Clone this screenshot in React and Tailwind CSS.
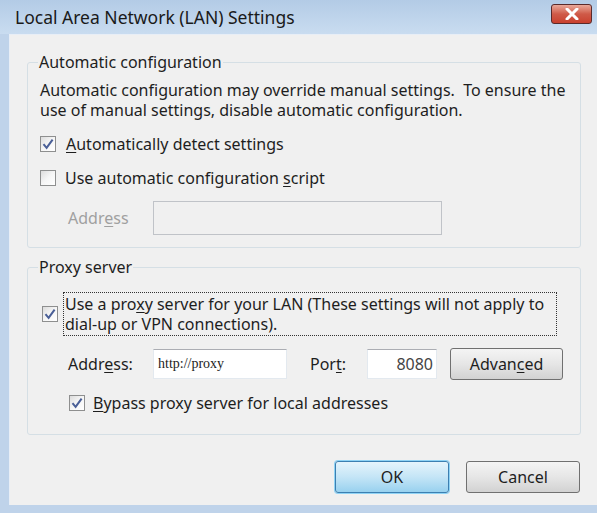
const font = { fontFamily: '"Noto Sans", "Open Sans", sans-serif' }

function Check({ checked, className = '' }) {
  return (
    <span className={`inline-flex items-center justify-center w-[16px] h-[16px] border border-[#8e8f8f] bg-gradient-to-br from-[#dcdcdc] via-[#f6f6f6] to-[#ffffff] shrink-0 ${className}`}>
      {checked && (
        <svg width="12" height="12" viewBox="0 0 12 12">
          <path d="M1.5 6.2 L4.6 9.8 L10.6 1.6" fill="none" stroke="#4a5f97" strokeWidth="2" />
        </svg>
      )}
    </span>
  )
}

function U({ children }) {
  return <span className="underline underline-offset-2">{children}</span>
}

export default function App() {
  return (
    <div className="w-[597px] h-[513px] flex flex-col bg-[#bfd3ea] text-[#1e1e1e] text-[16px] leading-[20px] overflow-hidden" style={font}>
      {/* title bar */}
      <div className="h-[34px] flex items-center justify-between pl-[15px] pr-[5px] bg-gradient-to-b from-[#b3cbe6] to-[#c9dcf0]">
        <div className="text-[17.5px] text-[#1a1a1a]">Local Area Network (LAN) Settings</div>
        <div className="w-[41px] h-[20px] -mt-[6px] rounded-[3px] border border-[#5a2a2a] bg-gradient-to-b from-[#e8a89a] via-[#cf5a48] to-[#c9402e] flex items-center justify-center">
          <svg width="14" height="12" viewBox="0 0 14 12">
            <path d="M2 1 L12 11 M12 1 L2 11" stroke="#fff" strokeWidth="3" strokeLinecap="round" />
          </svg>
        </div>
      </div>

      <div className="flex-1 flex pl-[9px] pb-[8px]">
        <div className="flex-1 bg-[#f0f0f0] border-l border-t border-[#e8eef6] flex flex-col">
          {/* Automatic configuration */}
          <fieldset className="ml-[17px] mt-[17px] w-[554px] h-[196px] border border-[#d5dfe5] rounded-[3px] pl-[12px] pr-[6px] pb-0">
            <legend className="px-[1px] -ml-[2px]">Automatic configuration</legend>
            <p className="mt-[8px] whitespace-nowrap">
              Automatic configuration may override manual settings.&nbsp; To ensure the
              <br />
              use of manual settings, disable automatic configuration.
            </p>
            <label className="flex items-center gap-[10px] mt-[14px]">
              <Check checked />
              <span><U>A</U>utomatically detect settings</span>
            </label>
            <label className="flex items-center gap-[9px] mt-[14px]">
              <Check />
              <span>Use automatic configuration <U>s</U>cript</span>
            </label>
            <div className="flex items-center mt-[13px]">
              <span className="ml-[28px] w-[85px] text-[#a0a0a0]">Addr<U>e</U>ss</span>
              <div className="w-[289px] h-[34px] border border-[#c0c3c8] bg-[#f0f0f0]" />
            </div>
          </fieldset>

          {/* Proxy server */}
          <fieldset className="ml-[17px] mt-[9px] w-[554px] h-[178px] border border-[#d5dfe5] rounded-[3px] pl-[14px] pr-[6px]">
            <legend className="px-[1px] -ml-[4px]">Proxy server</legend>
            <div className="flex items-center mt-[15px]">
              <Check checked />
              <div className="ml-[5px] w-[494px] border border-dotted border-[#333] px-[1px] py-[1px] whitespace-nowrap">
                Use a pro<U>x</U>y server for your LAN (These settings will not apply to
                <br />
                dial-up or VPN connections).
              </div>
            </div>
            <div className="flex items-center mt-[12px] pl-[26px]">
              <span className="w-[85px]">Addr<U>e</U>ss:</span>
              <div className="w-[134px] h-[30px] border border-[#e3e9ef] border-t-[#abadb3] bg-white flex items-center pl-[4px] text-[14px] text-[#222]" style={{ fontFamily: '"Liberation Serif", serif' }}>
                http://proxy
              </div>
              <span className="ml-[23px] w-[57px]">Por<U>t</U>:</span>
              <div className="w-[70px] h-[30px] border border-[#e3e9ef] border-t-[#abadb3] bg-white flex items-center justify-end pr-[3px] text-[16px] text-[#444]">
                8080
              </div>
              <button className="ml-[13px] w-[113px] h-[32px] rounded-[3px] border border-[#707070] bg-gradient-to-b from-[#f4f4f4] via-[#e6e6e6] to-[#d2d2d2]">
                Advan<U>c</U>ed
              </button>
            </div>
            <label className="flex items-center gap-[8px] mt-[13px] pl-[27px]">
              <Check checked />
              <span><U>B</U>ypass proxy server for local addresses</span>
            </label>
          </fieldset>

          {/* buttons */}
          <div className="flex justify-end gap-[17px] mt-[26px] pr-[17px]">
            <button className="w-[114px] h-[32px] rounded-[3px] border border-[#3c7fb1] shadow-[0_0_0_1px_#8fd3f5] bg-gradient-to-b from-[#e5f4fc] via-[#c4e5f6] to-[#98d1ef]">
              OK
            </button>
            <button className="w-[114px] h-[32px] rounded-[3px] border border-[#707070] bg-gradient-to-b from-[#f4f4f4] via-[#e6e6e6] to-[#d2d2d2]">
              Cancel
            </button>
          </div>
        </div>
      </div>
    </div>
  )
}
